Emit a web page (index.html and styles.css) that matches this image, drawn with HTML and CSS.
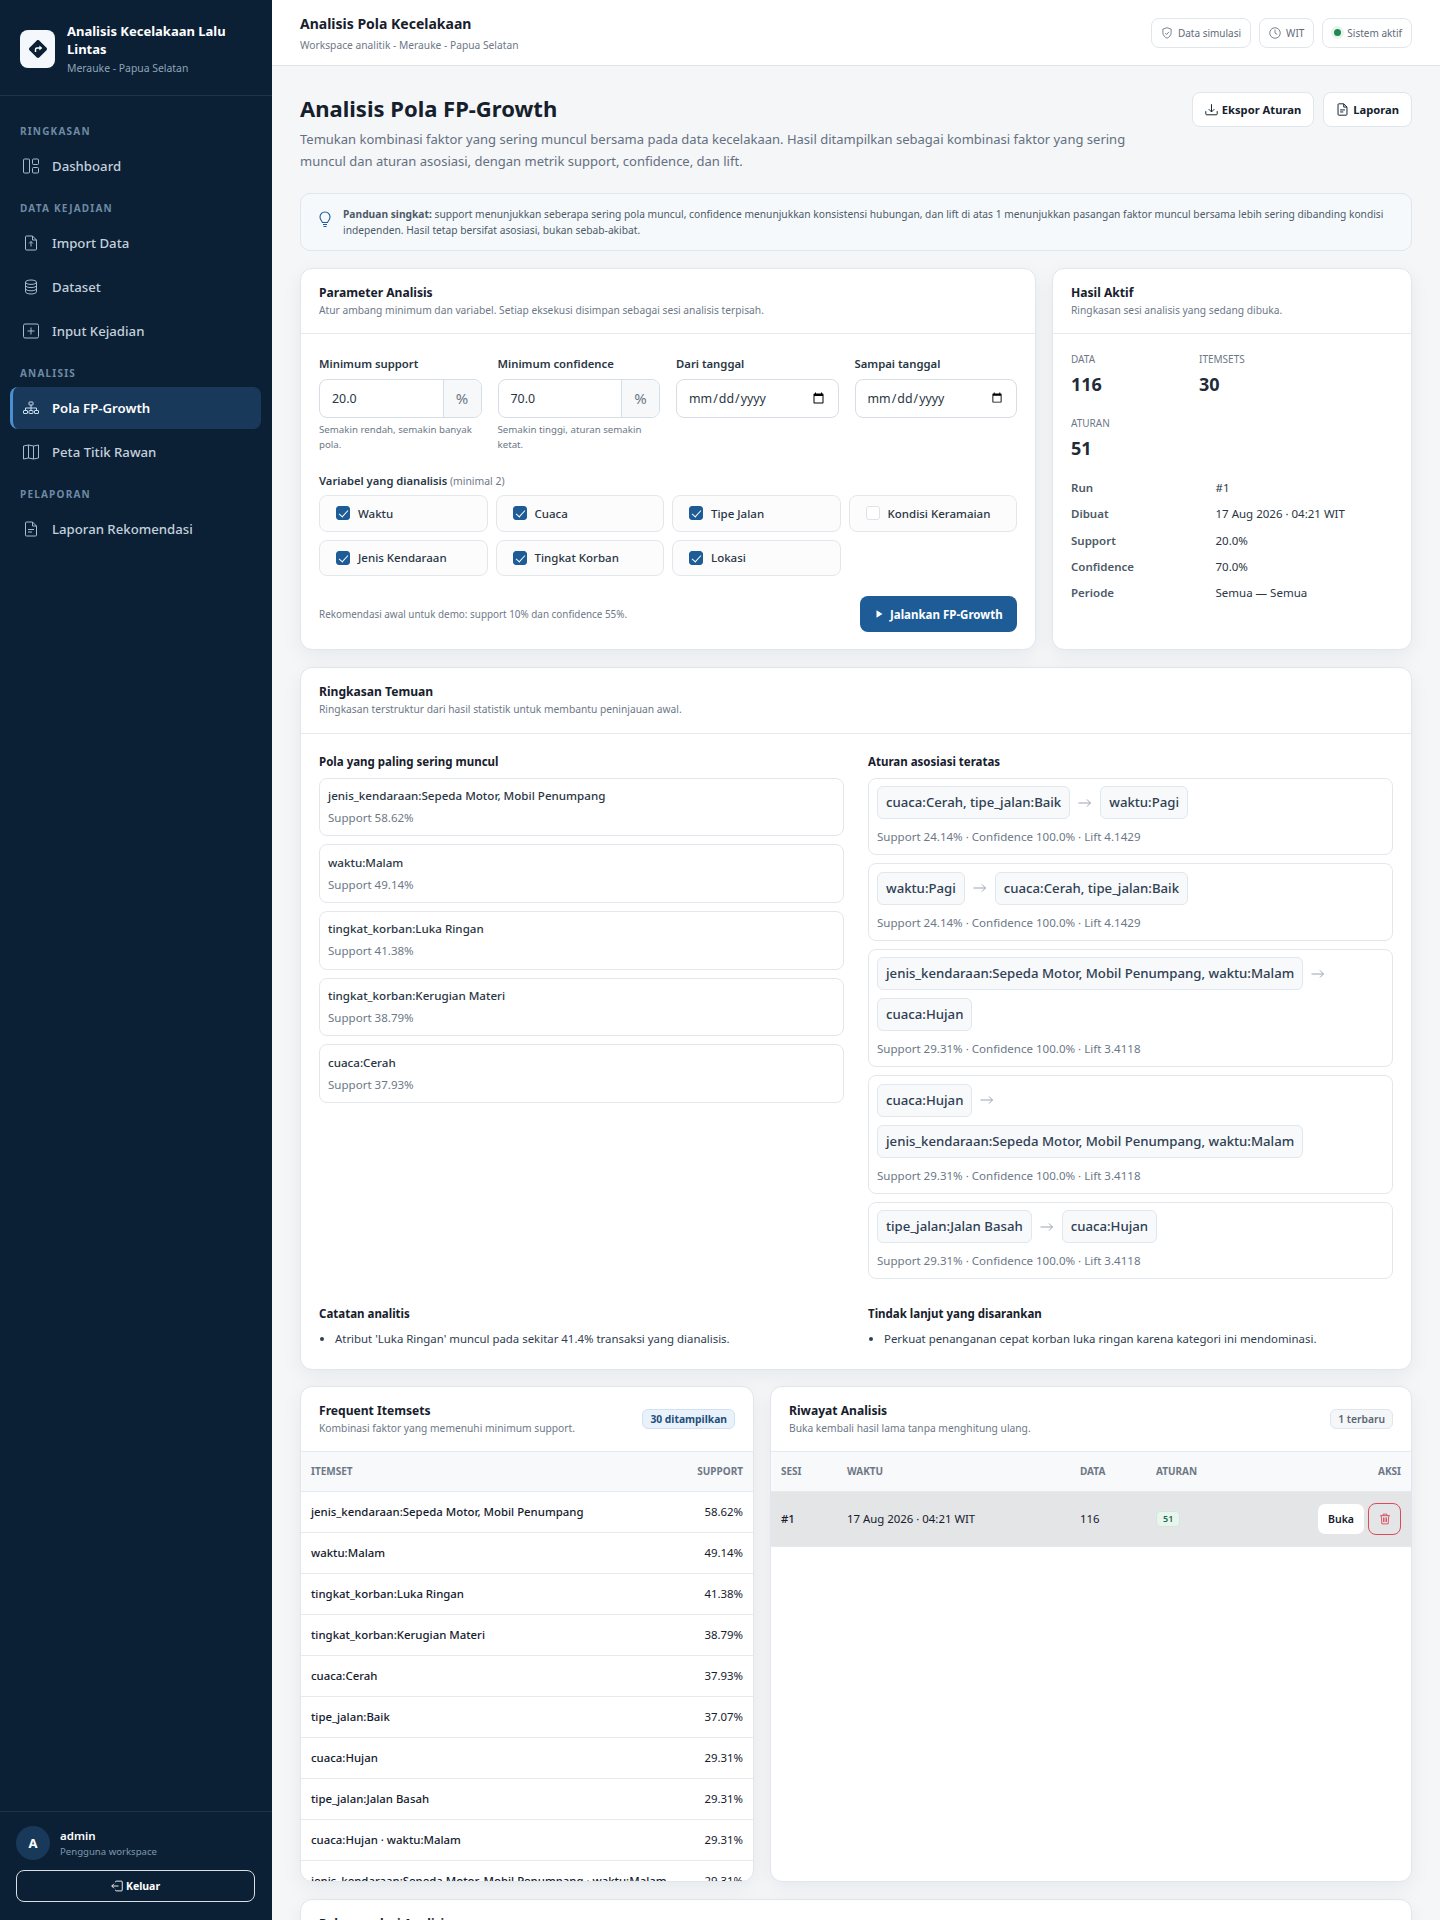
FILE: index.html
```html
<!DOCTYPE html>
<html lang="en">

<head>
    <meta charset="UTF-8">
    <meta name="viewport" content="width=device-width, initial-scale=1.0">
    <title>Analisis Pola FP-Growth</title>
    <link rel="stylesheet" href="styles.css">
</head>

<body>
    <div class="app">
        <aside class="sidebar">
            <div class="brand">
                <div class="brand-logo">
                    <svg width="18" height="18" viewBox="0 0 16 16"><path fill="#0b2034" d="M9.05.435c-.58-.58-1.52-.58-2.1 0L.436 6.95c-.58.58-.58 1.519 0 2.098l6.516 6.516c.58.58 1.519.58 2.098 0l6.516-6.516c.58-.58.58-1.519 0-2.098L9.05.435z"/><path fill="none" stroke="#fff" stroke-width="1.3" d="M5.8 10.6V8.4c0-.8.5-1.3 1.3-1.3h3.6"/><path fill="#fff" d="M9.2 4.9v4.4l2.6-2.2z"/></svg>
                </div>
                <div>
                    <div class="brand-title">Analisis Kecelakaan Lalu Lintas</div>
                    <div class="brand-sub">Merauke - Papua Selatan</div>
                </div>
            </div>
            <nav class="nav">
                <div class="nav-label">RINGKASAN</div>
                <a class="nav-item">
                    <svg class="nav-icon" viewBox="0 0 16 16"><rect x=".5" y="1" width="6" height="14" rx="1"/><rect x="9.5" y="1" width="6" height="5.5" rx="1"/><rect x="9.5" y="9.5" width="6" height="5.5" rx="1"/></svg>
                    Dashboard
                </a>
                <div class="nav-label">DATA KEJADIAN</div>
                <a class="nav-item">
                    <svg class="nav-icon" viewBox="0 0 16 16"><path d="M2.5 2a1 1 0 0 1 1-1h6l4 4v9a1 1 0 0 1-1 1h-9a1 1 0 0 1-1-1z"/><path d="M9.5 1v4h4M8 11.5v-5M6 8.5l2-2 2 2"/></svg>
                    Import Data
                </a>
                <a class="nav-item">
                    <svg class="nav-icon" viewBox="0 0 16 16"><ellipse cx="8" cy="3.2" rx="5.5" ry="2.2"/><path d="M2.5 3.2v9.6c0 1.2 2.5 2.2 5.5 2.2s5.5-1 5.5-2.2V3.2M2.5 6.4c0 1.2 2.5 2.2 5.5 2.2s5.5-1 5.5-2.2M2.5 9.6c0 1.2 2.5 2.2 5.5 2.2s5.5-1 5.5-2.2"/></svg>
                    Dataset
                </a>
                <a class="nav-item">
                    <svg class="nav-icon" viewBox="0 0 16 16"><rect x=".5" y="1" width="15" height="14" rx="1.5"/><path d="M8 4.5v7M4.5 8h7"/></svg>
                    Input Kejadian
                </a>
                <div class="nav-label">ANALISIS</div>
                <a class="nav-item active">
                    <svg class="nav-icon" viewBox="0 0 16 16"><rect x="6" y="2" width="4" height="3" rx=".5"/><rect x=".5" y="10.5" width="4" height="3" rx=".5"/><rect x="6" y="10.5" width="4" height="3" rx=".5"/><rect x="11.5" y="10.5" width="4" height="3" rx=".5"/><path d="M8 5v5.5M2.5 10.5V8h11v2.5"/></svg>
                    Pola FP-Growth
                </a>
                <a class="nav-item">
                    <svg class="nav-icon" viewBox="0 0 16 16"><path d="M.5 2l5-1 5 1 5-1v13l-5 1-5-1-5 1zM5.5 1v13M10.5 2v13"/></svg>
                    Peta Titik Rawan
                </a>
                <div class="nav-label">PELAPORAN</div>
                <a class="nav-item">
                    <svg class="nav-icon" viewBox="0 0 16 16"><path d="M2.5 2a1 1 0 0 1 1-1h6l4 4v9a1 1 0 0 1-1 1h-9a1 1 0 0 1-1-1z"/><path d="M9.5 1v4h4M5 8.5h6M5 11h4"/></svg>
                    Laporan Rekomendasi
                </a>
            </nav>
            <div class="user-box">
                <div class="user-row">
                    <div class="avatar">A</div>
                    <div>
                        <div class="user-name">admin</div>
                        <div class="user-role">Pengguna workspace</div>
                    </div>
                </div>
                <button class="logout">
                    <svg width="12" height="12" viewBox="0 0 16 16" fill="none" stroke="#fff" stroke-width="1.2"><path d="M6 3v-.5a1 1 0 0 1 1-1h7a1 1 0 0 1 1 1v11a1 1 0 0 1-1 1H7a1 1 0 0 1-1-1V13M10 8H1M4 5L1 8l3 3"/></svg>
                    Keluar
                </button>
            </div>
        </aside>

        <div class="main">
            <header class="topbar">
                <div class="topbar-text">
                    <div class="topbar-title">Analisis Pola Kecelakaan</div>
                    <div class="topbar-sub">Workspace analitik - Merauke - Papua Selatan</div>
                </div>
                <div class="topbar-chips">
                    <span class="chip">
                        <svg width="12" height="12" viewBox="0 0 16 16" fill="none" stroke="#5f6b7a" stroke-width="1.1"><path d="M8 1l5.5 1.8v4.7c0 3.5-2.5 6-5.5 7.5-3-1.5-5.5-4-5.5-7.5V2.8z"/><path d="M5.5 8l2 2 3-3.5"/></svg>
                        Data simulasi
                    </span>
                    <span class="chip">
                        <svg width="12" height="12" viewBox="0 0 16 16" fill="none" stroke="#5f6b7a" stroke-width="1.1"><circle cx="8" cy="8" r="7"/><path d="M8 3.5V8l3 2"/></svg>
                        WIT
                    </span>
                    <span class="chip"><i class="dot"></i>Sistem aktif</span>
                </div>
            </header>

            <div class="content">
                <div class="page-head">
                    <div class="page-intro">
                        <h1>Analisis Pola FP-Growth</h1>
                        <p>Temukan kombinasi faktor yang sering muncul bersama pada data kecelakaan. Hasil ditampilkan sebagai kombinasi faktor yang sering muncul dan aturan asosiasi, dengan metrik support, confidence, dan lift.</p>
                    </div>
                    <div class="page-actions">
                        <button class="btn-light">
                            <svg width="13" height="13" viewBox="0 0 16 16" fill="none" stroke="#14202e" stroke-width="1.2"><path d="M1 10v3.5a1 1 0 0 0 1 1h12a1 1 0 0 0 1-1V10M8 1.5V11M4.5 7.5L8 11l3.5-3.5"/></svg>
                            Ekspor Aturan
                        </button>
                        <button class="btn-light">
                            <svg width="13" height="13" viewBox="0 0 16 16" fill="none" stroke="#14202e" stroke-width="1.2"><path d="M2.5 2a1 1 0 0 1 1-1h6l4 4v9a1 1 0 0 1-1 1h-9a1 1 0 0 1-1-1z"/><path d="M9.5 1v4h4M5 8.5h6M5 11h4"/></svg>
                            Laporan
                        </button>
                    </div>
                </div>

                <div class="guide">
                    <svg width="16" height="18" viewBox="0 0 16 16" fill="none" stroke="#1d5c96" stroke-width="1.1"><path d="M5.5 11.5C5 10 3 9 3 6a5 5 0 0 1 10 0c0 3-2 4-2.5 5.5z"/><path d="M6 13.5h4M6.5 15.5h3"/></svg>
                    <p><strong>Panduan singkat:</strong> support menunjukkan seberapa sering pola muncul, confidence menunjukkan konsistensi hubungan, dan lift di atas 1 menunjukkan pasangan faktor muncul bersama lebih sering dibanding kondisi independen. Hasil tetap bersifat asosiasi, bukan sebab-akibat.</p>
                </div>

                <div class="row-top">
                    <section class="card">
                        <div class="card-head">
                            <div class="card-title">Parameter Analisis</div>
                            <div class="card-sub">Atur ambang minimum dan variabel. Setiap eksekusi disimpan sebagai sesi analisis terpisah.</div>
                        </div>
                        <div class="card-body form-body">
                            <div class="fields">
                                <div>
                                    <label class="field-label">Minimum support</label>
                                    <div class="input-group"><span class="input-value">20.0</span><span class="input-unit">%</span></div>
                                    <div class="field-hint">Semakin rendah, semakin banyak pola.</div>
                                </div>
                                <div>
                                    <label class="field-label">Minimum confidence</label>
                                    <div class="input-group"><span class="input-value">70.0</span><span class="input-unit">%</span></div>
                                    <div class="field-hint">Semakin tinggi, aturan semakin ketat.</div>
                                </div>
                                <div>
                                    <label class="field-label">Dari tanggal</label>
                                    <input class="date-input" type="date">
                                </div>
                                <div>
                                    <label class="field-label">Sampai tanggal</label>
                                    <input class="date-input" type="date">
                                </div>
                            </div>
                            <div class="vars-label"><strong>Variabel yang dianalisis</strong> (minimal 2)</div>
                            <div class="vars">
                                <div class="var"><span class="check on"></span>Waktu</div>
                                <div class="var"><span class="check on"></span>Cuaca</div>
                                <div class="var"><span class="check on"></span>Tipe Jalan</div>
                                <div class="var"><span class="check"></span>Kondisi Keramaian</div>
                                <div class="var"><span class="check on"></span>Jenis Kendaraan</div>
                                <div class="var"><span class="check on"></span>Tingkat Korban</div>
                                <div class="var"><span class="check on"></span>Lokasi</div>
                            </div>
                            <div class="run-row">
                                <span class="run-note">Rekomendasi awal untuk demo: support 10% dan confidence 55%.</span>
                                <button class="btn-primary">
                                    <svg width="9" height="10" viewBox="0 0 9 10"><path fill="#fff" d="M1.5 1.2v7.6L7.5 5z"/></svg>
                                    Jalankan FP-Growth
                                </button>
                            </div>
                        </div>
                    </section>

                    <section class="card">
                        <div class="card-head">
                            <div class="card-title">Hasil Aktif</div>
                            <div class="card-sub">Ringkasan sesi analisis yang sedang dibuka.</div>
                        </div>
                        <div class="card-body result-body">
                            <div class="stats">
                                <div><div class="stat-label">DATA</div><div class="stat-value">116</div></div>
                                <div><div class="stat-label">ITEMSETS</div><div class="stat-value">30</div></div>
                                <div><div class="stat-label">ATURAN</div><div class="stat-value">51</div></div>
                            </div>
                            <dl class="meta">
                                <dt>Run</dt><dd>#1</dd>
                                <dt>Dibuat</dt><dd>17 Aug 2026 · 04:21 WIT</dd>
                                <dt>Support</dt><dd>20.0%</dd>
                                <dt>Confidence</dt><dd>70.0%</dd>
                                <dt>Periode</dt><dd>Semua — Semua</dd>
                            </dl>
                        </div>
                    </section>
                </div>

                <section class="card summary">
                    <div class="card-head">
                        <div class="card-title">Ringkasan Temuan</div>
                        <div class="card-sub">Ringkasan terstruktur dari hasil statistik untuk membantu peninjauan awal.</div>
                    </div>
                    <div class="card-body summary-grid">
                        <div>
                            <div class="block-title">Pola yang paling sering muncul</div>
                            <div class="stack">
                                <div class="pattern"><div class="pattern-name">jenis_kendaraan:Sepeda Motor, Mobil Penumpang</div><div class="muted">Support 58.62%</div></div>
                                <div class="pattern"><div class="pattern-name">waktu:Malam</div><div class="muted">Support 49.14%</div></div>
                                <div class="pattern"><div class="pattern-name">tingkat_korban:Luka Ringan</div><div class="muted">Support 41.38%</div></div>
                                <div class="pattern"><div class="pattern-name">tingkat_korban:Kerugian Materi</div><div class="muted">Support 38.79%</div></div>
                                <div class="pattern"><div class="pattern-name">cuaca:Cerah</div><div class="muted">Support 37.93%</div></div>
                            </div>
                        </div>
                        <div>
                            <div class="block-title">Aturan asosiasi teratas</div>
                            <div class="stack">
                                <div class="rule">
                                    <div class="rule-flow"><span class="tag">cuaca:Cerah, tipe_jalan:Baik</span><svg class="arrow" viewBox="0 0 14 10"><path d="M.5 5h12M9 1.5L12.5 5 9 8.5"/></svg><span class="tag">waktu:Pagi</span></div>
                                    <div class="muted">Support 24.14% · Confidence 100.0% · Lift 4.1429</div>
                                </div>
                                <div class="rule">
                                    <div class="rule-flow"><span class="tag">waktu:Pagi</span><svg class="arrow" viewBox="0 0 14 10"><path d="M.5 5h12M9 1.5L12.5 5 9 8.5"/></svg><span class="tag">cuaca:Cerah, tipe_jalan:Baik</span></div>
                                    <div class="muted">Support 24.14% · Confidence 100.0% · Lift 4.1429</div>
                                </div>
                                <div class="rule">
                                    <div class="rule-flow"><span class="tag">jenis_kendaraan:Sepeda Motor, Mobil Penumpang, waktu:Malam</span><svg class="arrow" viewBox="0 0 14 10"><path d="M.5 5h12M9 1.5L12.5 5 9 8.5"/></svg><span class="tag">cuaca:Hujan</span></div>
                                    <div class="muted">Support 29.31% · Confidence 100.0% · Lift 3.4118</div>
                                </div>
                                <div class="rule">
                                    <div class="rule-flow"><span class="tag">cuaca:Hujan</span><svg class="arrow" viewBox="0 0 14 10"><path d="M.5 5h12M9 1.5L12.5 5 9 8.5"/></svg><span class="tag">jenis_kendaraan:Sepeda Motor, Mobil Penumpang, waktu:Malam</span></div>
                                    <div class="muted">Support 29.31% · Confidence 100.0% · Lift 3.4118</div>
                                </div>
                                <div class="rule">
                                    <div class="rule-flow"><span class="tag">tipe_jalan:Jalan Basah</span><svg class="arrow" viewBox="0 0 14 10"><path d="M.5 5h12M9 1.5L12.5 5 9 8.5"/></svg><span class="tag">cuaca:Hujan</span></div>
                                    <div class="muted">Support 29.31% · Confidence 100.0% · Lift 3.4118</div>
                                </div>
                            </div>
                        </div>
                        <div>
                            <div class="block-title">Catatan analitis</div>
                            <ul class="notes"><li>Atribut 'Luka Ringan' muncul pada sekitar 41.4% transaksi yang dianalisis.</li></ul>
                        </div>
                        <div>
                            <div class="block-title">Tindak lanjut yang disarankan</div>
                            <ul class="notes"><li>Perkuat penanganan cepat korban luka ringan karena kategori ini mendominasi.</li></ul>
                        </div>
                    </div>
                </section>

                <div class="row-bottom">
                    <section class="card table-card">
                        <div class="card-head head-split">
                            <div>
                                <div class="card-title">Frequent Itemsets</div>
                                <div class="card-sub">Kombinasi faktor yang memenuhi minimum support.</div>
                            </div>
                            <span class="badge-blue">30 ditampilkan</span>
                        </div>
                        <div class="table-scroll">
                            <table>
                                <thead><tr><th>ITEMSET</th><th class="right">SUPPORT</th></tr></thead>
                                <tbody>
                                    <tr><td class="strong">jenis_kendaraan:Sepeda Motor, Mobil Penumpang</td><td class="right">58.62%</td></tr>
                                    <tr><td class="strong">waktu:Malam</td><td class="right">49.14%</td></tr>
                                    <tr><td class="strong">tingkat_korban:Luka Ringan</td><td class="right">41.38%</td></tr>
                                    <tr><td class="strong">tingkat_korban:Kerugian Materi</td><td class="right">38.79%</td></tr>
                                    <tr><td class="strong">cuaca:Cerah</td><td class="right">37.93%</td></tr>
                                    <tr><td class="strong">tipe_jalan:Baik</td><td class="right">37.07%</td></tr>
                                    <tr><td class="strong">cuaca:Hujan</td><td class="right">29.31%</td></tr>
                                    <tr><td class="strong">tipe_jalan:Jalan Basah</td><td class="right">29.31%</td></tr>
                                    <tr><td class="strong">cuaca:Hujan · waktu:Malam</td><td class="right">29.31%</td></tr>
                                    <tr><td class="strong">jenis_kendaraan:Sepeda Motor, Mobil Penumpang · waktu:Malam</td><td class="right">29.31%</td></tr>
                                </tbody>
                            </table>
                        </div>
                    </section>

                    <section class="card table-card">
                        <div class="card-head head-split">
                            <div>
                                <div class="card-title">Riwayat Analisis</div>
                                <div class="card-sub">Buka kembali hasil lama tanpa menghitung ulang.</div>
                            </div>
                            <span class="badge-gray">1 terbaru</span>
                        </div>
                        <table class="history">
                            <thead><tr><th class="col-sesi">SESI</th><th class="col-waktu">WAKTU</th><th class="col-data">DATA</th><th class="col-aturan">ATURAN</th><th class="right">AKSI</th></tr></thead>
                            <tbody>
                                <tr class="current">
                                    <td class="strong">#1</td>
                                    <td>17 Aug 2026 · 04:21 WIT</td>
                                    <td>116</td>
                                    <td><span class="badge-green">51</span></td>
                                    <td class="right">
                                        <div class="row-actions">
                                            <button class="btn-open">Buka</button>
                                            <button class="btn-delete">
                                                <svg width="12" height="12" viewBox="0 0 16 16" fill="none" stroke="#dc4a5a" stroke-width="1.2"><path d="M1.5 3.5h13M5.5 3.5v-2h5v2M3 3.5l.8 11h8.4l.8-11M6 6v6M8 6v6M10 6v6"/></svg>
                                            </button>
                                        </div>
                                    </td>
                                </tr>
                            </tbody>
                        </table>
                    </section>
                </div>

                <section class="card next-card">
                    <div class="card-head">
                        <div class="card-title">Rekomendasi Analisis</div>
                    </div>
                </section>
            </div>
        </div>
    </div>
</body>

</html>
```

FILE: styles.css
```css
* {
    box-sizing: border-box;
}

html,
body {
    height: 1920px;
    overflow: hidden;
}

body {
    margin: 0;
    font-family: "Noto Sans", sans-serif;
    font-size: 14px;
    color: #16202c;
    background: #f4f6f8;
}

button {
    font-family: inherit;
}

.app {
    display: flex;
    height: 1920px;
}

/* sidebar */
.sidebar {
    width: 272px;
    flex-shrink: 0;
    display: flex;
    flex-direction: column;
    background: #0b2034;
}

.brand {
    display: flex;
    align-items: center;
    gap: 12px;
    height: 96px;
    padding: 2px 20px 0;
    border-bottom: 1px solid #1e3347;
}

.brand-logo {
    width: 35px;
    height: 38px;
    flex-shrink: 0;
    display: flex;
    align-items: center;
    justify-content: center;
    border-radius: 8px;
    background: #f4f8fc;
}

.brand-title {
    font-size: 13px;
    font-weight: 700;
    line-height: 18px;
    color: #fff;
}

.brand-sub {
    margin-top: 2px;
    font-size: 10.4px;
    line-height: 16px;
    color: #8ea4ba;
}

.nav {
    flex: 1;
    padding: 14px 11px 0 10px;
}

.nav-label {
    margin: 13px 0 6px;
    padding-left: 10px;
    font-size: 10px;
    font-weight: 700;
    line-height: 16px;
    letter-spacing: 1.2px;
    color: #6f8aa5;
}

.nav-item {
    display: flex;
    align-items: center;
    gap: 13px;
    height: 42px;
    margin-bottom: 2px;
    padding: 0 13px;
    border-radius: 8px;
    font-size: 13.2px;
    font-weight: 500;
    color: #c3d0dc;
}

.nav-item.active {
    border-left: 3px solid #4a90d0;
    padding-left: 10px;
    background: #19395a;
    font-weight: 600;
    color: #fff;
}

.nav-icon {
    width: 16px;
    height: 16px;
    flex-shrink: 0;
    fill: none;
    stroke: #a9bbcc;
    stroke-width: 1;
}

.nav-item.active .nav-icon {
    stroke: #c9ddf0;
}

.user-box {
    padding: 14px 17px 18px 16px;
    border-top: 1px solid #1e3347;
}

.user-row {
    display: flex;
    align-items: center;
    gap: 10px;
    height: 34px;
    margin-bottom: 10px;
}

.avatar {
    width: 34px;
    height: 34px;
    display: flex;
    align-items: center;
    justify-content: center;
    border-radius: 50%;
    background: #19395a;
    font-size: 13px;
    font-weight: 700;
    color: #fff;
}

.user-name {
    font-size: 11.5px;
    font-weight: 600;
    line-height: 16px;
    color: #fff;
}

.user-role {
    font-size: 9.6px;
    line-height: 15px;
    color: #7f97ae;
}

.logout {
    width: 100%;
    height: 32px;
    display: flex;
    align-items: center;
    justify-content: center;
    gap: 3px;
    border: 1px solid #d9dfe5;
    border-radius: 8px;
    background: transparent;
    font-size: 10.5px;
    font-weight: 700;
    color: #fff;
}

/* topbar */
.main {
    flex: 1;
    min-width: 0;
}

.topbar {
    display: flex;
    align-items: center;
    justify-content: space-between;
    height: 66px;
    padding: 0 28px;
    border-bottom: 1px solid #dfe4ea;
    background: #fff;
}

.topbar-text {
    margin-top: 2px;
}

.topbar-title {
    font-size: 14px;
    font-weight: 700;
    line-height: 20px;
}

.topbar-sub {
    margin-top: 3px;
    font-size: 10.24px;
    line-height: 16px;
    color: #6d7887;
}

.topbar-chips {
    display: flex;
    gap: 8px;
}

.chip {
    display: flex;
    align-items: center;
    gap: 5px;
    height: 30px;
    padding: 0 9px;
    border: 1px solid #e1e6ec;
    border-radius: 8px;
    background: #fff;
    font-size: 10px;
    color: #5f6b7a;
}

.dot {
    width: 7px;
    height: 7px;
    margin: 0 1px 0 2px;
    border-radius: 50%;
    background: #1f8a50;
    box-shadow: 0 0 0 3px #e8f3ed;
}

/* page head */
.content {
    padding: 26px 28px 0;
}

.page-head {
    display: flex;
    justify-content: space-between;
    margin-bottom: 21px;
}

.page-intro {
    width: 860px;
}

.page-intro h1 {
    margin: 0 0 5px;
    font-size: 22px;
    font-weight: 700;
    line-height: 32px;
}

.page-intro p {
    margin: 0;
    font-size: 13px;
    line-height: 21.6px;
    color: #647080;
}

.page-actions {
    display: flex;
    gap: 9px;
    align-items: flex-start;
}

.btn-light {
    display: flex;
    align-items: center;
    gap: 4px;
    height: 35px;
    padding: 0 12px;
    border: 1px solid #e1e6ec;
    border-radius: 8px;
    background: #fff;
    font-size: 11.2px;
    font-weight: 700;
    color: #14202e;
}

.guide {
    display: flex;
    gap: 10px;
    margin-bottom: 17px;
    padding: 12px 16px;
    border: 1px solid #dfe6ee;
    border-radius: 10px;
    background: #f5f9fc;
}

.guide svg {
    flex-shrink: 0;
    margin-top: 4px;
}

.guide p {
    margin: 0;
    font-size: 10.24px;
    line-height: 16px;
    color: #4d5a68;
}

/* cards */
.card {
    border: 1px solid #e1e6ec;
    border-radius: 12px;
    background: #fff;
    box-shadow: 0 6px 20px rgba(15, 30, 50, 0.06);
    overflow: hidden;
}

.card-head {
    height: 65px;
    padding: 15px 18px 0;
    border-bottom: 1px solid #e6eaef;
}

.head-split {
    display: flex;
    align-items: center;
    justify-content: space-between;
    padding-top: 0;
}

.card-title {
    font-size: 12.1px;
    font-weight: 700;
    line-height: 18px;
}

.card-sub {
    font-size: 10.24px;
    line-height: 16px;
    color: #6d7887;
}

.card-body {
    padding: 18px;
}

.row-top {
    display: grid;
    grid-template-columns: 736px 360px;
    gap: 16px;
    margin-bottom: 17px;
}

/* form */
.form-body {
    padding-top: 21px;
    padding-bottom: 17px;
}

.fields {
    display: grid;
    grid-template-columns: repeat(4, 1fr);
    gap: 16px;
}

.field-label {
    display: block;
    margin-bottom: 6px;
    font-size: 11.3px;
    font-weight: 600;
    line-height: 18px;
    color: #2a3644;
}

.input-group {
    display: flex;
    height: 39px;
    border: 1px solid #d7dde4;
    border-radius: 8px;
    overflow: hidden;
}

.input-value {
    flex: 1;
    padding: 0 12px;
    line-height: 37px;
    font-size: 12.4px;
    color: #2a3644;
}

.input-unit {
    width: 38px;
    border-left: 1px solid #d7dde4;
    background: #f7f8fa;
    text-align: center;
    line-height: 36px;
    font-size: 15px;
    color: #6d7887;
}

.field-hint {
    margin-top: 4px;
    font-size: 9.7px;
    line-height: 15px;
    color: #6d7887;
}

.date-input {
    display: block;
    width: 100%;
    height: 39px;
    padding: 0 11px;
    border: 1px solid #d7dde4;
    border-radius: 8px;
    background: #fff;
    font-family: inherit;
    font-size: 12.4px;
    color: #2a3644;
}

.vars-label {
    margin: 20px 0 5px;
    font-size: 10.4px;
    line-height: 18px;
    color: #6d7887;
}

.vars-label strong {
    font-size: 11.2px;
    font-weight: 600;
    color: #2a3644;
}

.vars {
    display: grid;
    grid-template-columns: repeat(4, 1fr);
    gap: 8px;
}

.var {
    display: flex;
    align-items: center;
    gap: 8px;
    height: 36.5px;
    padding: 0 16px;
    border: 1px solid #e3e7ec;
    border-radius: 8px;
    background: #fcfcfd;
    font-size: 11.5px;
    font-weight: 500;
    color: #2a3644;
}

.check {
    position: relative;
    flex-shrink: 0;
    width: 14px;
    height: 14px;
    border: 1px solid #dfe3e8;
    border-radius: 3px;
    background: #fff;
}

.check.on {
    border-color: #1d5c96;
    background: #1d5c96;
}

/* tick on top of the checkbox */
.check.on::after {
    content: "";
    position: absolute;
    left: 4px;
    top: 1px;
    width: 4px;
    height: 8px;
    border: solid #fff;
    border-width: 0 1.5px 1.5px 0;
    transform: rotate(42deg);
}

.run-row {
    display: flex;
    align-items: center;
    justify-content: space-between;
    margin-top: 20px;
}

.run-note {
    font-size: 9.9px;
    color: #6d7887;
}

.btn-primary {
    display: flex;
    align-items: center;
    gap: 6px;
    width: 157px;
    height: 36px;
    padding: 0 0 0 15px;
    border: none;
    border-radius: 8px;
    background: #1d5c96;
    font-size: 11.5px;
    font-weight: 700;
    color: #fff;
}

/* active result */
.result-body {
    padding-top: 18px;
}

.stats {
    display: grid;
    grid-template-columns: 128px 1fr;
    gap: 18px 0;
}

.stat-label {
    font-size: 10px;
    line-height: 15px;
    color: #6d7887;
}

.stat-value {
    margin-top: 4px;
    font-size: 18px;
    font-weight: 700;
    line-height: 27px;
    color: #1f2b38;
}

.meta {
    display: grid;
    grid-template-columns: 144.5px 1fr;
    row-gap: 8.7px;
    margin: 17px 0 0;
    font-size: 11.5px;
    line-height: 17.5px;
}

.meta dt {
    font-weight: 600;
    color: #4d5a68;
}

.meta dd {
    margin: 0;
    color: #2a3644;
}

/* summary */
.summary {
    margin-bottom: 16px;
}

.summary .card-head {
    height: 66px;
}

.summary-grid {
    display: grid;
    grid-template-columns: 1fr 1fr;
    gap: 25.5px 24px;
    padding-top: 19px;
    padding-bottom: 20px;
}

.block-title {
    margin-bottom: 6.5px;
    font-size: 11.5px;
    font-weight: 700;
    line-height: 18px;
    color: #16202c;
}

.stack {
    display: flex;
    flex-direction: column;
    gap: 8px;
}

.pattern {
    padding: 8.35px 8px;
    border: 1px solid #e3e7ec;
    border-radius: 8px;
}

.pattern-name {
    font-size: 11.6px;
    font-weight: 500;
    line-height: 18px;
    color: #2a3644;
}

.muted {
    margin-top: 4px;
    font-size: 11.55px;
    line-height: 18px;
    color: #6d7887;
}

.rule {
    padding: 7.75px 8px;
    border: 1px solid #e3e7ec;
    border-radius: 8px;
}

.rule .muted {
    margin-top: 9px;
}

.rule-flow {
    display: flex;
    flex-wrap: wrap;
    align-items: center;
    gap: 8px;
}

.tag {
    height: 33px;
    padding: 0 8px;
    border: 1px solid #e1e7ee;
    border-radius: 6px;
    background: #f7f9fb;
    font-size: 13.2px;
    font-weight: 500;
    line-height: 31px;
    color: #2f4052;
}

.arrow {
    width: 14px;
    height: 10px;
    fill: none;
    stroke: #9aa5b1;
    stroke-width: 1;
}

.notes {
    margin: 0;
    padding-left: 16px;
    font-size: 11.42px;
    line-height: 20px;
    color: #2f4052;
}

/* tables */
.row-bottom {
    display: grid;
    grid-template-columns: 454px 642px;
    gap: 16px;
    margin-bottom: 17px;
}

.table-card {
    height: 496px;
}

.table-scroll {
    height: 429px;
    overflow: hidden;
}

table {
    width: 100%;
    border-collapse: collapse;
    font-size: 11.4px;
}

th {
    height: 39px;
    padding: 0 10px;
    border-bottom: 1px solid #e6eaef;
    background: #f8f9fb;
    text-align: left;
    font-size: 10px;
    font-weight: 700;
    color: #6d7887;
}

td {
    height: 41px;
    padding: 0 10px;
    border-bottom: 1px solid #e6eaef;
    color: #14202e;
}

.right {
    text-align: right;
}

.strong {
    font-weight: 500;
}

.head-split .card-sub {
    white-space: nowrap;
}

.badge-blue {
    height: 20px;
    padding: 0 7px;
    border: 1px solid #cfe1f3;
    border-radius: 6px;
    background: #e9f2fb;
    font-size: 10.3px;
    font-weight: 700;
    line-height: 18px;
    color: #1d4f7c;
}

.badge-gray {
    height: 20px;
    padding: 0 7px;
    border: 1px solid #e1e6ec;
    border-radius: 6px;
    background: #f4f6f8;
    font-size: 10.3px;
    font-weight: 600;
    line-height: 18px;
    color: #5a6676;
}

.history .col-sesi {
    width: 66px;
}

.history .col-waktu {
    width: 233px;
}

.history .col-data {
    width: 76px;
}

.history .col-aturan {
    width: 120px;
}

.current td {
    height: 55px;
    background: #e4e5e6;
}

.badge-green {
    display: inline-block;
    height: 16px;
    padding: 0 6px;
    border: 1px solid #cfe8d9;
    border-radius: 4px;
    background: #e8f5ee;
    font-size: 9px;
    font-weight: 600;
    line-height: 14px;
    color: #1c6b42;
}

.row-actions {
    display: flex;
    justify-content: flex-end;
    align-items: center;
    gap: 4px;
}

.btn-open {
    width: 46px;
    height: 30px;
    border: none;
    border-radius: 7px;
    background: #fff;
    font-size: 10.5px;
    font-weight: 600;
    color: #14202e;
}

.btn-delete {
    width: 33px;
    height: 32px;
    display: flex;
    align-items: center;
    justify-content: center;
    border: 1px solid #dc4a5a;
    border-radius: 8px;
    background: transparent;
}

.next-card {
    height: 100px;
}
```
